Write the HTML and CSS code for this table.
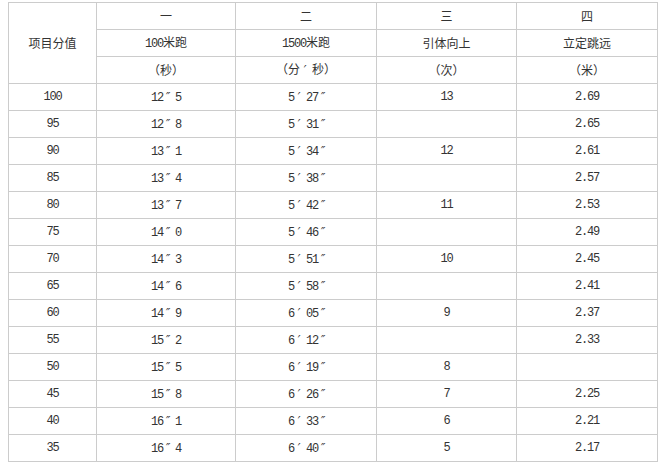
FILE: index.html
```html
<!DOCTYPE html>
<html lang="zh-CN">
<head>
<meta charset="utf-8">
<title>项目分值</title>
<link rel="stylesheet" href="styles.css">
</head>
<body>
<div class="table">
  <div class="cell head-label">项目分值</div>
  <div class="cell">一</div>
  <div class="cell">二</div>
  <div class="cell">三</div>
  <div class="cell">四</div>
  <div class="cell"><span><span class="n">100</span>米跑</span></div>
  <div class="cell"><span><span class="n">1500</span>米跑</span></div>
  <div class="cell">引体向上</div>
  <div class="cell">立定跳远</div>
  <div class="cell">（秒）</div>
  <div class="cell"><span>（分<span class="n"><span class="p">′</span> </span>秒）</span></div>
  <div class="cell">（次）</div>
  <div class="cell">（米）</div>

  <div class="cell n">100</div><div class="cell n"><span>12<span class="p">″</span> 5</span></div><div class="cell n"><span>5<span class="p">′</span> 27<span class="p">″</span></span></div><div class="cell n">13</div><div class="cell n">2.69</div>
  <div class="cell n">95</div><div class="cell n"><span>12<span class="p">″</span> 8</span></div><div class="cell n"><span>5<span class="p">′</span> 31<span class="p">″</span></span></div><div class="cell n"></div><div class="cell n">2.65</div>
  <div class="cell n">90</div><div class="cell n"><span>13<span class="p">″</span> 1</span></div><div class="cell n"><span>5<span class="p">′</span> 34<span class="p">″</span></span></div><div class="cell n">12</div><div class="cell n">2.61</div>
  <div class="cell n">85</div><div class="cell n"><span>13<span class="p">″</span> 4</span></div><div class="cell n"><span>5<span class="p">′</span> 38<span class="p">″</span></span></div><div class="cell n"></div><div class="cell n">2.57</div>
  <div class="cell n">80</div><div class="cell n"><span>13<span class="p">″</span> 7</span></div><div class="cell n"><span>5<span class="p">′</span> 42<span class="p">″</span></span></div><div class="cell n">11</div><div class="cell n">2.53</div>
  <div class="cell n">75</div><div class="cell n"><span>14<span class="p">″</span> 0</span></div><div class="cell n"><span>5<span class="p">′</span> 46<span class="p">″</span></span></div><div class="cell n"></div><div class="cell n">2.49</div>
  <div class="cell n">70</div><div class="cell n"><span>14<span class="p">″</span> 3</span></div><div class="cell n"><span>5<span class="p">′</span> 51<span class="p">″</span></span></div><div class="cell n">10</div><div class="cell n">2.45</div>
  <div class="cell n">65</div><div class="cell n"><span>14<span class="p">″</span> 6</span></div><div class="cell n"><span>5<span class="p">′</span> 58<span class="p">″</span></span></div><div class="cell n"></div><div class="cell n">2.41</div>
  <div class="cell n">60</div><div class="cell n"><span>14<span class="p">″</span> 9</span></div><div class="cell n"><span>6<span class="p">′</span> 05<span class="p">″</span></span></div><div class="cell n">9</div><div class="cell n">2.37</div>
  <div class="cell n">55</div><div class="cell n"><span>15<span class="p">″</span> 2</span></div><div class="cell n"><span>6<span class="p">′</span> 12<span class="p">″</span></span></div><div class="cell n"></div><div class="cell n">2.33</div>
  <div class="cell n">50</div><div class="cell n"><span>15<span class="p">″</span> 5</span></div><div class="cell n"><span>6<span class="p">′</span> 19<span class="p">″</span></span></div><div class="cell n">8</div><div class="cell n"></div>
  <div class="cell n">45</div><div class="cell n"><span>15<span class="p">″</span> 8</span></div><div class="cell n"><span>6<span class="p">′</span> 26<span class="p">″</span></span></div><div class="cell n">7</div><div class="cell n">2.25</div>
  <div class="cell n">40</div><div class="cell n"><span>16<span class="p">″</span> 1</span></div><div class="cell n"><span>6<span class="p">′</span> 33<span class="p">″</span></span></div><div class="cell n">6</div><div class="cell n">2.21</div>
  <div class="cell n">35</div><div class="cell n"><span>16<span class="p">″</span> 4</span></div><div class="cell n"><span>6<span class="p">′</span> 40<span class="p">″</span></span></div><div class="cell n">5</div><div class="cell n">2.17</div>
</div>
</body>
</html>
```
FILE: styles.css
```css
html, body {
  margin: 0;
  background: #fff;
}
body {
  padding: 2px 0 0 8px;
  font-family: "Noto Sans CJK SC", sans-serif;
  font-size: 12px;
  color: #333;
}
.table {
  display: grid;
  grid-template-columns: 88px 139px 141px 140px 141px;
  grid-auto-rows: 27px;
  width: 650px;
  box-sizing: border-box;
  border-left: 1px solid #cccccc;
  border-top: 1px solid #cccccc;
}
.cell {
  box-sizing: border-box;
  border-right: 1px solid #cccccc;
  border-bottom: 1px solid #cccccc;
  display: flex;
  align-items: center;
  justify-content: center;
  white-space: pre;
  line-height: 1;
}
.head-label {
  grid-row: span 3;
}
.n {
  font-family: "Liberation Mono", "Noto Sans CJK SC", monospace;
  letter-spacing: -1.2px;
}
.p {
  font-family: "DejaVu Sans Mono", monospace;
  font-style: italic;
}
```
